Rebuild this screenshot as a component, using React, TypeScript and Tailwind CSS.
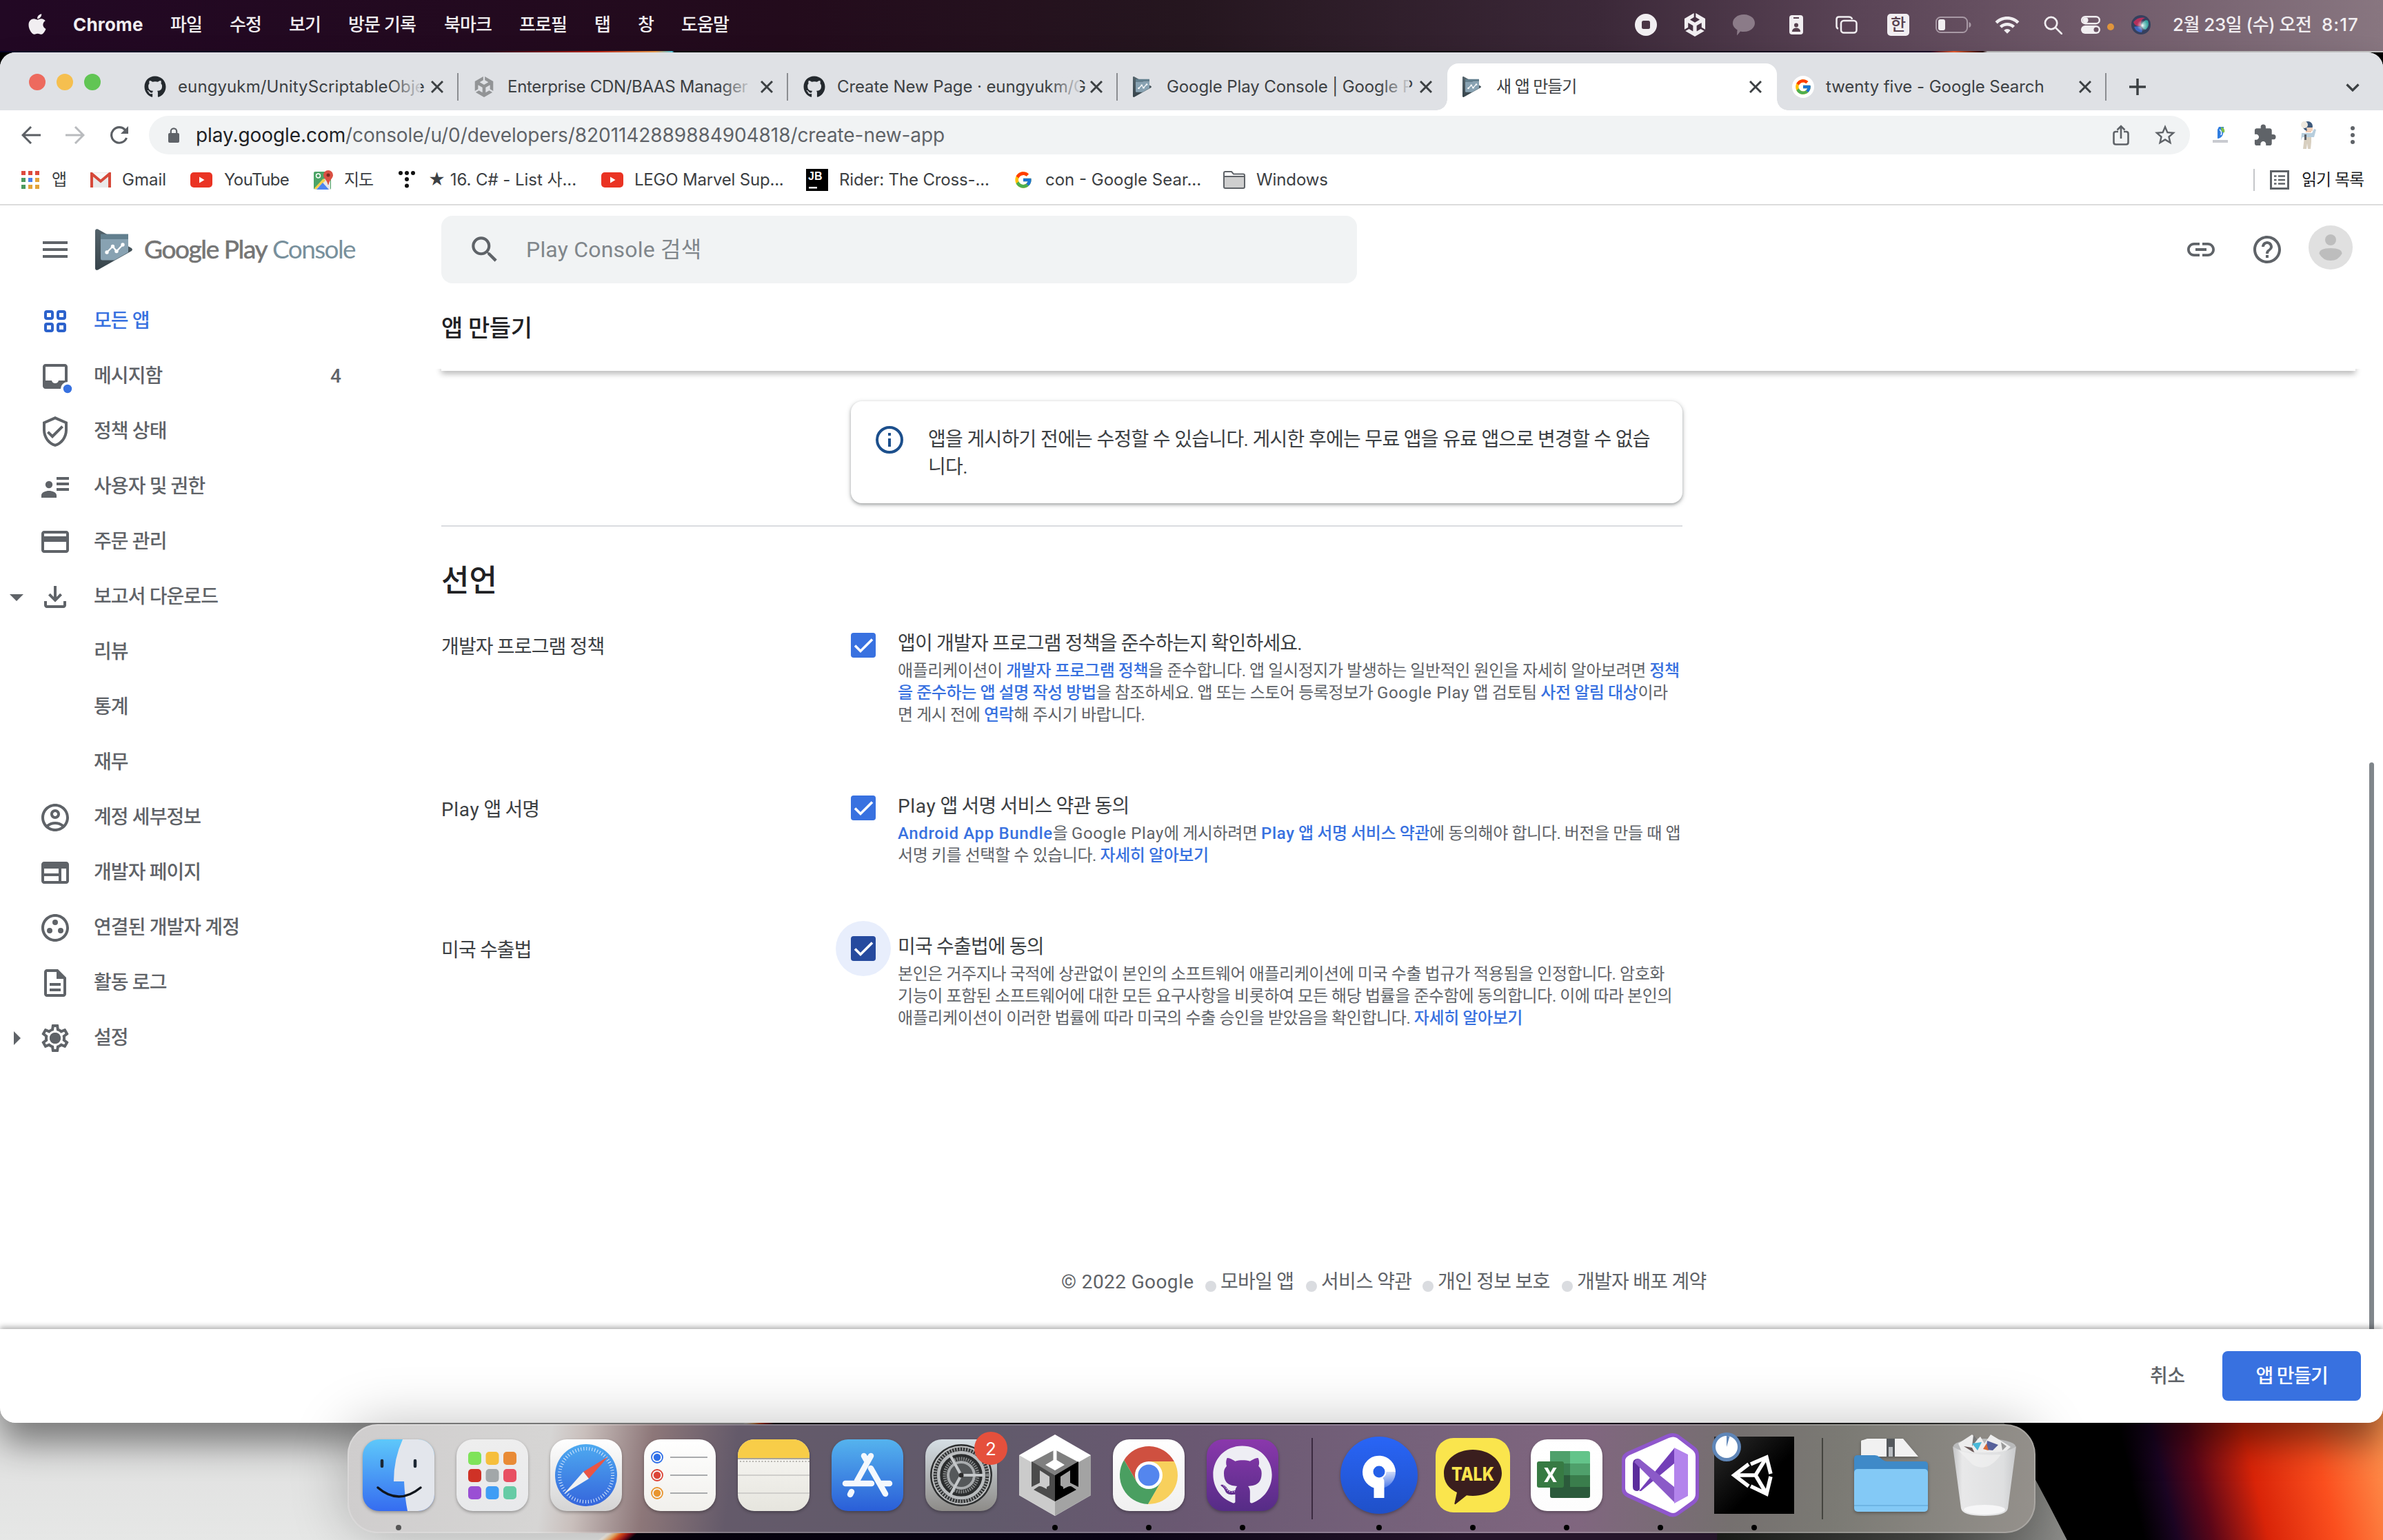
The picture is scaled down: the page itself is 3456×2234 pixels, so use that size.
import React from 'react';
import { FaApple, FaGithub } from 'react-icons/fa';
import { FcGoogle } from 'react-icons/fc';
import { SiUnity } from 'react-icons/si';
import { MdWifi, MdExtension, MdStarBorder, MdLink, MdHelpOutline, MdSearch, MdOutlineVerifiedUser, MdCreditCard, MdOutlineAccountCircle, MdOutlineGroupWork, MdOutlineSettings, MdArrowDropDown, MdArrowRight } from 'react-icons/md';

type TProps = { className?: string; children: React.ReactNode };
const T = ({ className = '', children }: TProps) => (
  <span className={`block whitespace-nowrap ${className}`}>{children}</span>
);

const Cross = ({ className = '' }: { className?: string }) => (
  <svg viewBox="0 0 18 18" className={`size-[18px] shrink-0 ${className}`} stroke="#3c4043" strokeWidth="3" fill="none"><path d="M1 1l16 16M17 1L1 17" /></svg>
);

const PlayLogo = ({ className = '' }: { className?: string }) => (
  <svg viewBox="0 0 54 60" className={className}>
    <defs>
      <linearGradient id="pl" x1="0" y1="0" x2="0" y2="1"><stop offset="0" stopColor="#54636b" /><stop offset="1" stopColor="#37444b" /></linearGradient>
    </defs>
    <path d="M0 3C0 .5 2 -.5 4 .6L52 27.500c2.500 1.400 2.500 3.600 0 5L4 59.400C2 60.500 0 59.500 0 57z" fill="url(#pl)" />
    <path d="M8 15H48V34L28 45.500H10.500Q8 45.500 8 43z" fill="#88a2b2" />
    <path d="M8 7.500H48V15H8z" fill="#627f8e" />
    <path d="M17 34l8.500-8.500L31 32.500 40 23" fill="none" stroke="#fff" strokeWidth="2.200" />
    <g fill="#fff"><circle cx="17" cy="34" r="2.700" /><circle cx="25.500" cy="25.500" r="2.700" /><circle cx="31" cy="32.500" r="2.700" /><circle cx="40" cy="23" r="2.700" /></g>
  </svg>
);

const menu: [string, string][] = [
  ['파일', 'w-[45px]'], ['수정', 'w-[45px]'], ['보기', 'w-[45px]'], ['방문 기록', 'w-[98px]'],
  ['북마크', 'w-[68px]'], ['프로필', 'w-[68px]'], ['탭', 'w-[22px]'], ['창', 'w-[22px]'], ['도움말', 'w-[68px]'],
];

const MenuBar = () => (
  <div className="relative flex h-[74px] items-center bg-[linear-gradient(90deg,#220824_0%,#230b1c_33%,#25161f_50%,#3b2838_67%,#5a4456_78%,#6e5868_87%,#887680_100%)] pb-[2px] text-[26px] leading-[32px] text-[#f1eef1]">
    <FaApple className="mb-[2px] ml-[37px] size-[34px] shrink-0" />
    <T className="ml-[35px] w-[103px] font-bold tracking-[0.2px]">Chrome</T>
    <div className="ml-[38px] flex gap-[41px] font-medium tracking-[-0.9px]">
      {menu.map(([t, c]) => <T key={t} className={c}>{t}</T>)}
    </div>
    <div className="ml-auto flex items-center">
      <svg viewBox="0 0 32 32" className="size-[32px]"><circle cx="16" cy="16" r="16" fill="#f1eef1" /><rect x="10" y="10" width="12" height="12" rx="2.500" fill="#4a3545" /></svg>
      <SiUnity className="ml-[38px] size-[34px]" />
      <svg viewBox="0 0 32 31" className="ml-[38px] h-[31px] w-[32px]" fill="#8b7b88"><path d="M16 0c9 0 16 5.500 16 12.500S25 25 16 25c-1.800 0-3.500-.2-5-.6L6 30.500l.5-8.200C2.500 20 0 16.500 0 12.500 0 5.500 7 0 16 0z" /></svg>
      <svg viewBox="0 0 20 28" className="ml-[50px] h-[28px] w-[20px]"><rect width="20" height="28" rx="4" fill="#f1eef1" /><g fill="#57414f"><rect x="6" y="3" width="8" height="2" /><circle cx="10" cy="14.500" r="3" /><path d="M4 24c0-4 3-5.500 6-5.500s6 1.500 6 5.500z" /></g></svg>
      <svg viewBox="0 0 32 26" className="ml-[47px] h-[26px] w-[32px]" fill="none" stroke="#f1eef1" strokeWidth="2.500"><rect x="8" y="7" width="22.500" height="17.500" rx="4" /><path d="M4 18.500Q1.500 18 1.500 15V5Q1.500 1.500 5 1.500H19Q23.500 1.500 24 5" /></svg>
      <div className="ml-[43px] flex size-[32px] items-center justify-center rounded-[5px] bg-[#f1eef1] text-[24px] leading-[30px] font-medium text-[#57414f]">한</div>
      <svg viewBox="0 0 52 24" className="ml-[38px] h-[24px] w-[52px]"><rect x="1" y="1" width="45" height="22" rx="6.500" fill="none" stroke="#a899a5" strokeWidth="2" /><rect x="4" y="4" width="10" height="16" rx="3" fill="#f1eef1" /><path d="M48.500 8q3 1 3 4t-3 4z" fill="#a899a5" /></svg>
      <MdWifi className="ml-[33px] size-[38px]" />
      <svg viewBox="0 0 28 28" className="ml-[34px] size-[27px]" fill="none" stroke="#f1eef1" strokeWidth="2.800"><circle cx="11" cy="11" r="9" /><path d="M18 18l9 9" strokeLinecap="round" /></svg>
      <svg viewBox="0 0 28 26" className="ml-[27px] h-[26px] w-[28px]"><rect x="1.200" y="1.200" width="25.600" height="10" rx="5" fill="none" stroke="#f1eef1" strokeWidth="2.400" /><circle cx="6.500" cy="6.200" r="4" fill="#f1eef1" /><rect y="14" width="28" height="12" rx="6" fill="#f1eef1" /><circle cx="22" cy="20" r="3.500" fill="#6b5565" /></svg>
      <div className="mt-[6px] ml-[10px] size-[10px] rounded-full bg-[#e0953c]" />
      <svg viewBox="0 0 28 28" className="ml-[25px] size-[28px]">
        <defs><radialGradient id="siri"><stop offset="0" stopColor="#fff" /><stop offset=".35" stopColor="#fff" stopOpacity=".5" /><stop offset="1" stopColor="#fff" stopOpacity="0" /></radialGradient></defs>
        <circle cx="14" cy="14" r="14" fill="#35405e" /><path d="M3 10Q10 2 20 4q-8 3-6 11Q6 18 3 10z" fill="#b4305a" /><path d="M15 13q5-8 9-5 3 8-3 13-6-1-6-8z" fill="#3aa6a0" /><path d="M4 17q6-2 10 1 3 4 1 7-8 0-11-8z" fill="#3f66c0" /><circle cx="16" cy="15" r="8" fill="url(#siri)" />
      </svg>
      <T className="ml-[32px] w-[203px] font-medium tracking-[-0.5px]">2월 23일 (수) 오전</T>
      <T className="mr-[34px] ml-[13px] w-[55px] font-medium tracking-[1px]">8:17</T>
    </div>
  </div>
);

const Fade = () => <div className="absolute inset-y-0 right-0 w-[44px] bg-linear-to-r from-[#dfe1e500] to-[#dfe1e5e0]" />;

const tabs = [
  { icon: <FaGithub className="size-[32px] text-[#24292e]" />, text: 'eungyukm/UnityScriptableObje', cls: 'tracking-[0.1px]', sep: true, fade: true },
  { icon: <SiUnity className="size-[30px] text-[#929496]" />, text: 'Enterprise CDN/BAAS Manager', cls: 'tracking-[-0.3px]', sep: true, fade: true },
  { icon: <FaGithub className="size-[32px] text-[#24292e]" />, text: 'Create New Page · eungyukm/G', cls: 'tracking-[-0.1px]', sep: true, fade: true },
  { icon: <PlayLogo className="h-[30px] w-[27px]" />, text: 'Google Play Console | Google P', cls: 'tracking-[-0.1px]', sep: false, fade: true },
  { icon: <PlayLogo className="h-[30px] w-[27px]" />, text: '새 앱 만들기', cls: 'tracking-[-1.1px]', sep: false, fade: false, active: true },
  { icon: <span className="flex size-[32px] items-center justify-center rounded-full bg-white"><FcGoogle className="size-[26px]" /></span>, text: 'twenty five - Google Search', cls: 'tracking-[-0.05px]', sep: true, fade: false },
];

const TabStrip = () => (
  <div className="flex h-[84px] items-end bg-[#dfe1e5] text-[24px] leading-[30px] text-[#3c4043]">
    <div className="mb-[29px] ml-[42px] flex w-[145px] gap-[16px]">
      <div className="size-[24px] rounded-full bg-[#ed6a5e]" />
      <div className="size-[24px] rounded-full bg-[#f5bf4f]" />
      <div className="size-[24px] rounded-full bg-[#61c554]" />
    </div>
    {tabs.map((t) => (
      <div key={t.text} className={`relative flex h-[68px] w-[478px] shrink-0 items-center pl-[22px] ${t.active ? 'rounded-t-[16px] bg-white' : ''}`}>
        {t.active && <div className="absolute bottom-0 -left-[16px] size-[16px] bg-[radial-gradient(circle_at_0_0,transparent_15.500px,white_16px)]" />}
        {t.active && <div className="absolute -right-[16px] bottom-0 size-[16px] bg-[radial-gradient(circle_at_100%_0,transparent_15.500px,white_16px)]" />}
        <div className="flex w-[49px] shrink-0 items-center">{t.icon}</div>
        <div className="relative w-[352px] shrink-0">
          <T className={t.cls}>{t.text}</T>
          {t.fade && <Fade />}
        </div>
        <Cross className="ml-[15px]" />
        {t.sep && <div className="ml-auto h-[40px] w-[2px] bg-[#8b8d91]" />}
      </div>
    ))}
    <svg viewBox="0 0 24 24" className="mb-[22px] ml-[33px] size-[24px]" stroke="#3c4043" strokeWidth="3.500"><path d="M12 0v24M0 12h24" /></svg>
    <svg viewBox="0 0 20 12" className="mr-[34px] mb-[27px] ml-auto h-[12px] w-[20px]" stroke="#3c4043" strokeWidth="3.200" fill="none"><path d="M1.500 1.500L10 10l8.500-8.500" /></svg>
  </div>
);

const Toolbar = () => (
  <div className="flex h-[72px] items-center bg-white text-[28px] leading-[36px]">
    <svg viewBox="0 0 28 26" className="ml-[31px] h-[26px] w-[28px]" stroke="#5b5f64" strokeWidth="3" fill="none"><path d="M28 13H3M14 1L2 13l12 12" /></svg>
    <svg viewBox="0 0 28 26" className="ml-[36px] h-[26px] w-[28px]" stroke="#b9bbbe" strokeWidth="3" fill="none"><path d="M0 13h25M14 1l12 12-12 12" /></svg>
    <svg viewBox="0 0 28 28" className="ml-[36px] size-[28px]" stroke="#5b5f64" strokeWidth="3.200" fill="none"><path d="M24.500 18A11.300 11.300 0 1 1 22.500 6.500" /><path d="M27 1v11H16z" fill="#5b5f64" stroke="none" /></svg>
    <div className="ml-[29px] flex h-[56px] w-[2960px] items-center rounded-full bg-[#f1f3f4]">
      <svg viewBox="0 0 16 22" className="ml-[28px] h-[22px] w-[16px]" fill="#5f6368"><rect y="8" width="16" height="14" rx="2" /><path d="M3.800 9V5.500a4.200 4.200 0 0 1 8.400 0V9" fill="none" stroke="#5f6368" strokeWidth="2.200" /></svg>
      <div className="ml-[24px] flex tracking-[-0.07px] text-[#5f6368]">
        <T className="w-[217px] text-[#202124]">play.google.com</T>
        <T>/console/u/0/developers/8201142889884904818/create-new-app</T>
      </div>
      <svg viewBox="0 0 24 30" className="ml-auto h-[30px] w-[24px]" fill="none" stroke="#5f6368" strokeWidth="2.600"><path d="M8 10H4.500Q1.500 10 1.500 13v12.500q0 3 3 3h15q3 0 3-3V13q0-3-3-3H16M12 20V3M6.500 7.500L12 2l5.500 5.500" /></svg>
      <MdStarBorder className="mr-[18px] ml-[34px] size-[36px] text-[#5f6368]" />
    </div>
    <svg viewBox="0 0 24 26" className="ml-[32px] h-[26px] w-[24px]"><path d="M10 1h7v7l-2 6q-3 4-7 4V5z" fill="#2f7de0" /><path d="M13 1c4 1 6 4 5 8-3 1-5-2-5-8z" fill="#7fc04a" /><path d="M11 5q4 3 2 8" stroke="#fff" strokeWidth="1.500" fill="none" /><path d="M1 20h22v4H1z" fill="#c9cbd0" /></svg>
    <MdExtension className="ml-[35px] size-[35px] text-[#5f6368]" />
    <svg viewBox="0 0 28 42" className="ml-[32px] h-[42px] w-[28px]"><path d="M8 24h10v7l-1 10h-4l-1-8-1 8H6z" fill="#d8cfc0" /><path d="M4 18h15l3-6 3 1-3 11H5l-2 5z" fill="#b7cddc" /><path d="M10 8h8v9h-8z" fill="#f0c8ae" /><circle cx="13" cy="8" r="7" fill="#3e5a7c" /><circle cx="8" cy="6" r="5" fill="#efe9df" /><path d="M11 10h9v5h-8z" fill="#f3d2bb" /><path d="M8 20h3v8H8z" fill="#5c5f66" /></svg>
    <svg viewBox="0 0 6 26" className="mr-[41px] ml-auto h-[26px] w-[6px]" fill="#5f6368"><circle cx="3" cy="3" r="3" /><circle cx="3" cy="13" r="3" /><circle cx="3" cy="23" r="3" /></svg>
  </div>
);

const YouTube = ({ className = '' }: { className?: string }) => (
  <svg viewBox="0 0 32 22" className={`h-[22px] w-[32px] shrink-0 ${className}`}><rect width="32" height="22" rx="5" fill="#ea3323" /><path d="M13 6.500v9l7.500-4.500z" fill="#fff" /></svg>
);

const Bookmarks = () => (
  <div className="flex h-[66px] items-center border-b-2 border-[#dcdcdc] bg-white pb-[7px] text-[24px] leading-[30px] text-[#3c4043]">
    <svg viewBox="0 0 26 26" className="ml-[31px] size-[26px]">
      <g fill="#dd4b3e"><path d="M0 0h6v6H0zM10 0h6v6h-6zM20 0h6v6h-6z" /></g><path d="M0 10h6v6H0zM0 20h6v6H0z" fill="#4c9a5f" /><path d="M10 10h6v6h-6z" fill="#4c82ee" /><path d="M20 10h6v6h-6zM10 20h6v6h-6zM20 20h6v6h-6z" fill="#e2a33a" />
    </svg>
    <T className="ml-[18px] w-[21px]">앱</T>
    <svg viewBox="0 0 30 22" className="ml-[35px] h-[22px] w-[30px]"><path d="M2 0h26v22H2z" fill="#e9e9e9" /><path d="M2 1l13 11L28 1z" fill="#f8f8f8" /><path d="M2 22V2l13 11L28 2v20" fill="none" stroke="#d6493a" strokeWidth="4" /></svg>
    <T className="ml-[16px] w-[64px]">Gmail</T>
    <YouTube className="ml-[35px]" />
    <T className="ml-[17px] w-[93px] tracking-[-0.6px]">YouTube</T>
    <svg viewBox="0 0 28 28" className="ml-[37px] size-[28px]"><rect y="2" width="25" height="26" rx="2" fill="#4ca466" /><path d="M0 28L24 4v24z" fill="#e6e6e6" /><path d="M1 26L14 12l3 3L3 28z" fill="#f7d04a" /><path d="M4 28l9-10 9 10z" fill="#4d84ef" /><path d="M21 0a7 7 0 0 1 7 7c0 5-5.500 7-6.500 14h-1C19.500 14 14 12 14 7a7 7 0 0 1 7-7z" fill="#da5043" /><circle cx="21" cy="7" r="2.500" fill="#7c2a22" /><circle cx="6.500" cy="8" r="3" fill="none" stroke="#fff" strokeWidth="1.500" /></svg>
    <T className="ml-[16px] w-[42px] tracking-[-1.1px]">지도</T>
    <svg viewBox="0 0 24 26" className="ml-[37px] h-[26px] w-[24px]"><g fill="#111"><circle cx="3" cy="3" r="3" /><circle cx="12" cy="3" r="3" /><circle cx="21" cy="3" r="3" /><circle cx="12" cy="12" r="3" /><circle cx="12" cy="21.500" r="3" /></g></svg>
    <T className="ml-[19px] w-[216px] tracking-[-0.05px]">★ 16. C# - List 사...</T>
    <YouTube className="ml-[35px]" />
    <T className="ml-[16px] w-[215px] tracking-[-0.2px]">LEGO Marvel Sup...</T>
    <svg viewBox="0 0 32 32" className="ml-[34px] size-[32px]"><path d="M0 0h32v32H0z" fill="#000" /><text x="3" y="16" fontSize="16" fontWeight="700" fill="#fff" fontFamily="Liberation Sans, sans-serif">JB</text><path d="M4 26h12v2.500H4z" fill="#fff" /></svg>
    <T className="ml-[16px] w-[218px] tracking-[-0.15px]">Rider: The Cross-...</T>
    <FcGoogle className="ml-[35px] size-[28px]" />
    <T className="ml-[18px] w-[224px]">con - Google Sear...</T>
    <svg viewBox="0 0 32 26" className="ml-[34px] h-[26px] w-[32px]" stroke="#5f6368" strokeWidth="2" fill="#cfcfcf"><path d="M1 8V3q0-2 2-2h9l3 3.500h14q2 0 2 2V8z" fill="#fff" /><path d="M1 8h30v15q0 2-2 2H3q-2 0-2-2z" /></svg>
    <T className="ml-[16px] w-[103px] tracking-[-0.1px]">Windows</T>
    <div className="ml-auto h-[32px] w-[2px] bg-[#c4c6c9]" />
    <svg viewBox="0 0 28 28" className="ml-[22px] size-[28px]" stroke="#5f6368" fill="none"><rect x="1.500" y="1.500" width="25" height="25" strokeWidth="3" /><path d="M6 8.500h3.500M6 14h3.500M6 19.500h3.500M12 8.500h10M12 14h10M12 19.500h10" strokeWidth="2.400" /></svg>
    <T className="mr-[28px] ml-[18px] w-[90px] tracking-[-1px] text-[#202124]">읽기 목록</T>
  </div>
);

const G = ({ children }: { children: React.ReactNode }) => <svg viewBox="0 0 24 24" className="size-[48px]" fill="#5f6368">{children}</svg>;

const nav: { icon?: React.ReactNode; text: string; arrow?: string; count?: string; active?: boolean }[] = [
  { text: '모든 앱', active: true, icon: <G><g fill="none" stroke="#2c62cc" strokeWidth="2"><rect x="5" y="5" width="5" height="5" rx="1" /><rect x="14" y="5" width="5" height="5" rx="1" /><rect x="5" y="14" width="5" height="5" rx="1" /><rect x="14" y="14" width="5" height="5" rx="1" /></g></G> },
  { text: '메시지함', count: '4', icon: <svg viewBox="0 0 24 24" className="size-[48px] overflow-visible" fill="#5f6368"><path fillRule="evenodd" d="M5 3h14c1.100 0 2 .9 2 2v14c0 1.100-.9 2-2 2H5c-1.100 0-2-.9-2-2V5c0-1.100.9-2 2-2zM5 5v10h4.500c.3 1.300 1.200 2 2.500 2s2.200-.7 2.500-2H19V5z" /><circle cx="21" cy="21" r="5" fill="#fff" /><circle cx="21" cy="21" r="3.100" fill="#3871e0" /></svg> },
  { text: '정책 상태', icon: <MdOutlineVerifiedUser className="size-[48px]" /> },
  { text: '사용자 및 권한', icon: <G><circle cx="7.500" cy="10.500" r="2.600" /><path d="M2 20v-1.800c0-2 3-3.200 5.500-3.200s5.500 1.200 5.500 3.200V20zM13 5h9v2h-9zM13 9h9v2h-9zM13 13h9v2h-9z" /></G> },
  { text: '주문 관리', icon: <MdCreditCard className="size-[48px]" /> },
  { text: '보고서 다운로드', arrow: 'down', icon: <G><path d="M11 4h2v8l2.600-2.600L17 10.800l-5 5-5-5 1.400-1.400L11 12zM4 15h2v3h12v-3h2v3c0 1.100-.9 2-2 2H6c-1.100 0-2-.9-2-2z" /></G> },
  { text: '리뷰' }, { text: '통계' }, { text: '재무' },
  { text: '계정 세부정보', icon: <MdOutlineAccountCircle className="size-[48px]" /> },
  { text: '개발자 페이지', icon: <G><path fillRule="evenodd" d="M4 4h16c1.100 0 2 .9 2 2v12c0 1.100-.9 2-2 2H4c-1.100 0-2-.9-2-2V6c0-1.100.9-2 2-2zM4 9v3.500h10.500V9zM4 14.500V18h10.500v-3.500zM16.500 9v9H20V9z" /></G> },
  { text: '연결된 개발자 계정', icon: <MdOutlineGroupWork className="size-[48px]" /> },
  { text: '활동 로그', icon: <G><path d="M8 16h8v2H8zm0-4h8v2H8zm6-10H6c-1.100 0-2 .9-2 2v16c0 1.100.89 2 1.990 2H18c1.100 0 2-.9 2-2V8l-6-6zm4 18H6V4h7v5h5v11z" /></G> },
  { text: '설정', arrow: 'right', icon: <span className="relative block size-[48px]"><MdOutlineSettings className="size-[48px]" /><span className="absolute top-[16px] left-[16px] size-[16px] rounded-full bg-[#5f6368]" /></span> },
];

const Sidebar = () => (
  <nav className="flex w-[640px] shrink-0 flex-col">
    <div className="flex h-[128px] items-center">
      <svg viewBox="0 0 36 24" className="ml-[62px] h-[24px] w-[36px]" fill="#5f6368"><path d="M0 0h36v4H0zM0 10h36v4H0zM0 20h36v4H0z" /></svg>
      <PlayLogo className="ml-[40px] h-[60px] w-[54px]" />
      <div className="mb-[3px] ml-[17px] flex font-[family-name:Lato,sans-serif] text-[37px] leading-[44px] text-[#757575]">
        <T className="w-[186px] tracking-[-1.4px] [-webkit-text-stroke:0.6px_#757575]">Google Play</T>
        <T className="tracking-[-1.600px] text-[#78909c]">Console</T>
      </div>
    </div>
    {nav.map((n) => (
      <div key={n.text} className={`flex h-[80px] items-center text-[28px] leading-[40px] font-medium ${n.active ? 'text-[#3871e0]' : 'text-[#5f6368]'}`}>
        <div className="flex w-[56px] items-center">
          {n.arrow === 'down' && <MdArrowDropDown className="size-[48px]" />}
          {n.arrow === 'right' && <MdArrowRight className="size-[48px]" />}
        </div>
        <div className="w-[80px]">{n.icon}</div>
        <T className="w-[343px] tracking-[-0.9px]">{n.text}</T>
        <div>{n.count}</div>
      </div>
    ))}
  </nav>
);

const A = ({ children }: { children: React.ReactNode }) => <span className="font-medium text-[#3871e0]">{children}</span>;
const En = ({ children }: { children: React.ReactNode }) => <span className="tracking-[0.650px]">{children}</span>;

type RowProps = { label: React.ReactNode; title: React.ReactNode; focus?: boolean; className: string; children: React.ReactNode };
const Declaration = ({ label, title, focus, className, children }: RowProps) => (
  <section className={`flex items-start ${className}`}>
    <div className="w-[594px] shrink-0 pt-[3px] text-[28px] leading-[36px] tracking-[-0.85px] text-[#3c4043]"><T>{label}</T></div>
    <div className="relative size-[36px] shrink-0">
      {focus && <div className="absolute -inset-[22px] rounded-full bg-[#e8eefc]" />}
      <div className={`relative size-[36px] rounded-[4px] ${focus ? 'bg-[#264a9e]' : 'bg-[#3871e0]'}`}>
        <svg viewBox="0 0 36 36" className="size-[36px]" fill="none" stroke="#fff" strokeWidth="3.600"><path d="M6 18.500l8 8L31 9.500" /></svg>
      </div>
    </div>
    <div className="ml-[32px]">
      <div className="mt-[-4px] h-[43px] text-[28px] leading-[40px] tracking-[-0.82px] text-[#3c4043]"><T>{title}</T></div>
      <div className="text-[24px] leading-[32px] tracking-[-0.42px] text-[#5f6368]">{children}</div>
    </div>
  </section>
);

const footer: [string, string][] = [['모바일 앱', 'w-[107px]'], ['서비스 약관', 'w-[130px]'], ['개인 정보 보호', 'w-[163px]'], ['개발자 배포 계약', 'w-[188px]']];

const Main = () => (
  <main className="flex flex-1 flex-col">
    <div className="flex h-[128px] items-center">
      <div className="flex h-[98px] w-[1328px] items-center rounded-[16px] bg-[#f1f3f4]">
        <MdSearch className="ml-[38px] size-[50px] text-[#5f6368]" />
        <T className="ml-[35px] text-[32px] leading-[40px] tracking-[0.2px] text-[#80868b]">Play Console 검색</T>
      </div>
      <MdLink className="ml-auto size-[48px] text-[#5f6368]" />
      <MdHelpOutline className="ml-[48px] size-[48px] text-[#5f6368]" />
      <svg viewBox="0 0 64 64" className="mt-[-7px] mr-[44px] ml-[36px] size-[64px]"><circle cx="32" cy="32" r="32" fill="#e0e0e0" /><g fill="#bdbdbd"><circle cx="32" cy="21" r="8" /><path d="M15.500 41q0-8 16.500-8t16.500 8Q43 51 32 51T15.500 41z" /></g></svg>
    </div>
    <div className="h-[102px] pt-[24px] text-[34px] leading-[52px] font-medium tracking-[-0.4px] text-[#202124]"><T>앱 만들기</T></div>
    <div className="mr-[40px] h-[10px] shrink-0 bg-white shadow-[0_4px_8px_rgba(0,0,0,0.3)] [clip-path:inset(7px_-12px_-20px_-12px)]" />
    <div className="mt-[44px] ml-[594px] flex h-[148px] w-[1206px] rounded-[16px] bg-white shadow-[0_2px_4px_rgba(60,64,67,0.4),0_2px_6px_2px_rgba(60,64,67,0.12)]">
      <svg viewBox="0 0 40 40" className="mt-[36px] ml-[36px] size-[40px] shrink-0"><circle cx="20" cy="20" r="18" fill="none" stroke="#1c4f8c" strokeWidth="4" /><path d="M18 10h4v4h-4zM18 18h4v12h-4z" fill="#1c4f8c" /></svg>
      <div className="mt-[36px] ml-[36px] text-[28px] leading-[40px] tracking-[-0.69px] text-[#3c4043]">
        <T>앱을 게시하기 전에는 수정할 수 있습니다. 게시한 후에는 무료 앱을 유료 앱으로 변경할 수 없습</T>
        <T>니다.</T>
      </div>
    </div>
    <div className="mt-[32px] h-[2px] w-[1800px] bg-[#dadce0]" />
    <h2 className="mt-[47px] text-[44px] leading-[64px] font-medium text-[#202124]"><T>선언</T></h2>
    <Declaration className="mt-[43px] h-[236px]" label="개발자 프로그램 정책" title="앱이 개발자 프로그램 정책을 준수하는지 확인하세요.">
      <T>애플리케이션이 <A>개발자 프로그램 정책</A>을 준수합니다. 앱 일시정지가 발생하는 일반적인 원인을 자세히 알아보려면 <A>정책</A></T>
      <T><A>을 준수하는 앱 설명 작성 방법</A>을 참조하세요. 앱 또는 스토어 등록정보가 <En>Google Play</En> 앱 검토팀 <A>사전 알림 대상</A>이라</T>
      <T>면 게시 전에 <A>연락</A>해 주시기 바랍니다.</T>
    </Declaration>
    <Declaration className="h-[204px]" label={<><En>Play</En> 앱 서명</>} title={<><En>Play</En> 앱 서명 서비스 약관 동의</>}>
      <T><A><En>Android App Bundle</En></A>을 <En>Google Play</En>에 게시하려면 <A><En>Play</En> 앱 서명 서비스 약관</A>에 동의해야 합니다. 버전을 만들 때 앱</T>
      <T>서명 키를 선택할 수 있습니다. <A>자세히 알아보기</A></T>
    </Declaration>
    <Declaration className="h-[200px]" focus label="미국 수출법" title="미국 수출법에 동의">
      <T>본인은 거주지나 국적에 상관없이 본인의 소프트웨어 애플리케이션에 미국 수출 법규가 적용됨을 인정합니다. 암호화</T>
      <T>기능이 포함된 소프트웨어에 대한 모든 요구사항을 비롯하여 모든 해당 법률을 준수함에 동의합니다. 이에 따라 본인의</T>
      <T>애플리케이션이 이러한 법률에 따라 미국의 수출 승인을 받았음을 확인합니다. <A>자세히 알아보기</A></T>
    </Declaration>
    <footer className="mt-[282px] ml-[899px] flex h-[40px] items-center text-[28px] leading-[40px] tracking-[-0.75px] text-[#5f6368]">
      <T className="w-[192px] tracking-[0.4px]">© 2022 Google</T>
      {footer.map(([t, c]) => (
        <div key={t} className="flex items-center">
          <div className="mt-[12px] mr-[6px] ml-[17px] size-[16px] rounded-full bg-[#dadce0]" />
          <T className={c}>{t}</T>
        </div>
      ))}
    </footer>
  </main>
);

const BrowserWindow = () => (
  <div className="relative flex h-[1988px] shrink-0 flex-col overflow-hidden rounded-[22px] bg-white shadow-[0_30px_50px_rgba(0,0,0,0.45)]">
    <TabStrip />
    <Toolbar />
    <Bookmarks />
    <div className="relative flex h-[1630px] shrink-0 overflow-hidden font-[family-name:Roboto,'Noto_Sans_CJK_KR',sans-serif]">
      <Sidebar />
      <Main />
      <div className="absolute right-[13px] bottom-0 h-[822px] w-[7px] rounded-t-full bg-[#80868b]" />
    </div>
    <div className="relative flex h-[136px] shrink-0 items-center justify-end bg-white font-[family-name:Roboto,'Noto_Sans_CJK_KR',sans-serif] text-[28px] leading-[40px] font-medium shadow-[0_-3px_8px_rgba(0,0,0,0.32)]">
      <T className="mt-[2px] w-[52px] tracking-[-0.5px] text-[#5f6368]">취소</T>
      <div className="mr-[32px] ml-[53px] flex h-[72px] w-[201px] items-center justify-center rounded-[8px] bg-[#3871e0] text-white"><T className="mt-[2px] tracking-[-1.200px]">앱 만들기</T></div>
    </div>
  </div>
);

const Sq = ({ id, a, b, children }: { id: string; a: string; b: string; children?: React.ReactNode }) => (
  <svg viewBox="0 0 104 104" className="size-[104px] overflow-visible drop-shadow-[0_2px_2px_rgba(0,0,0,0.3)]">
    <defs><linearGradient id={id} x1="0" y1="0" x2="0" y2="1"><stop offset="0" stopColor={a} /><stop offset="1" stopColor={b} /></linearGradient><clipPath id={`${id}c`}><rect width="104" height="104" rx="24" /></clipPath></defs>
    <rect width="104" height="104" rx="24" fill={`url(#${id})`} />
    <g clipPath={`url(#${id}c)`}>{children}</g>
  </svg>
);

const Finder = () => (
  <Sq id="fi" a="#5ec8fa" b="#356cf0">
    <path d="M58 0H104V104H65Q61 84 60 61H45Q45 28 58 0z" fill="#e3e6ec" />
    <path d="M28 31v8M76 31v8" stroke="#1c2733" strokeWidth="4.500" strokeLinecap="round" />
    <path d="M22 70q30 26 62 0" stroke="#10151c" strokeWidth="3.500" fill="none" strokeLinecap="round" />
  </Sq>
);
const pad = ['#7fe35a', '#f6bf3c', '#e98b36', '#cf3226', '#a2a7a9', '#e84f62', '#9a4fd4', '#3f9df5', '#66cba5'];
const Launchpad = () => (
  <Sq id="lp" a="#eeeeee" b="#e8e9eb">
    {pad.map((c, i) => <rect key={c} x={17 + (i % 3) * 25.500} y={18 + Math.floor(i / 3) * 25} width="19" height="19" rx="5" fill={c} />)}
  </Sq>
);
const Safari = () => (
  <Sq id="sa" a="#ffffff" b="#d4d4d4">
    <defs><linearGradient id="sb" x1="0" y1="0" x2="0" y2="1"><stop offset="0" stopColor="#4eaaf0" /><stop offset="1" stopColor="#3565dc" /></linearGradient></defs>
    <circle cx="52" cy="52" r="45" fill="url(#sb)" />
    <circle cx="52" cy="52" r="38.500" fill="none" stroke="#dceafc" strokeWidth="5" strokeDasharray="1 3.032" />
    <path d="M84 25L56 57 48 47z" fill="#ea5545" /><path d="M20 79L48 47 56 57z" fill="#f2f2f2" />
  </Sq>
);
const Reminders = () => (
  <Sq id="re" a="#ffffff" b="#f1f0ec">
    {['#2f6fe8', '#dc4437', '#e8952f'].map((c, i) => (
      <g key={c}><circle cx="19" cy={26 + i * 26} r="8" fill="none" stroke={c} strokeWidth="1.800" /><circle cx="19" cy={26 + i * 26} r="5.200" fill={c} /><path d={`M38 ${26 + i * 26}h54`} stroke="#a9abad" strokeWidth="2" /></g>
    ))}
  </Sq>
);
const Notes = () => (
  <Sq id="no" a="#f9f8f5" b="#e6e5de">
    <path d="M0 0h104v27H0z" fill="#f8cd48" /><path d="M0 27h104v2H0z" fill="#a8a49a" />
    <path d="M3 32h104" stroke="#b7b5b0" strokeWidth="2" strokeDasharray="2 2.500" />
    <path d="M0 52h104M0 78h104" stroke="#cfcecb" strokeWidth="2" />
  </Sq>
);
const AppStore = () => (
  <Sq id="as" a="#55b3ee" b="#2a5ed8">
    <g stroke="#f4f8fd" strokeWidth="8.500" strokeLinecap="round" fill="none"><path d="M57 24L37 60M47 24l4 7M57 42l21 37M20 64h38M73 64h11M29 76l-2 4" /></g>
  </Sq>
);
const Settings = () => (
  <Sq id="se" a="#d6dfe5" b="#8d8b88">
    <circle cx="52" cy="52" r="45" fill="#2d2f30" /><circle cx="52" cy="52" r="41.500" fill="none" stroke="#c2c4c5" strokeWidth="2" />
    <circle cx="52" cy="52" r="38" fill="none" stroke="#9a9d9e" strokeWidth="5" strokeDasharray="1.800 2.200" />
    <circle cx="52" cy="52" r="33" fill="#2b2d2e" stroke="#b9bcbe" strokeWidth="4.500" />
    <circle cx="52" cy="52" r="24" fill="none" stroke="#858889" strokeWidth="5" strokeDasharray="1.800 1.500" /><circle cx="52" cy="52" r="19" fill="#55585a" stroke="#a9acae" strokeWidth="4" />
    <path d="M52 52h33M52 52L36 23M52 52L36 81" stroke="#c5c8ca" strokeWidth="4" /><circle cx="52" cy="52" r="3.500" fill="#2b2b2b" />
  </Sq>
);
const UnityHub = () => (
  <svg viewBox="0 0 104 118" className="h-[118px] w-[104px]">
    <path d="M52 0L104 30V88L52 118 0 88V30z" fill="#fff" /><path d="M0 30L52 59.500V118L0 88z" fill="#cbcbcb" /><path d="M104 30L52 59.500V118l52-30z" fill="#a3a3a3" />
    <path d="M52 22L86 40 52 59 18 40z" fill="#7f7f7f" /><path d="M49.500 16h5v21L66 44 52 52 38 44l11.500-7z" fill="#fff" />
    <path d="M18 39L52 59V97L21 80l9-6 10 5v-8L30 65v9l-12 2z" fill="#4b4b4b" /><path d="M86 39L52 59V97l31-17-9-6-10 5v-8l10-6v9l12 2z" fill="#000" />
    <path d="M30 52l14 9v13l-4 2-10-1-12 1 12-6z" fill="#cbcbcb" /><path d="M74 52L60 61v13l4 2 10-1 12 1-12-6z" fill="#a3a3a3" />
  </svg>
);
const Chrome = () => (
  <Sq id="ch" a="#ffffff" b="#f0f0f0">
    <g transform="translate(52 52)">
      <path d="M-35.800 -22A42 42 0 0 1 36.900 -20L0 -20L-17.320 10z" fill="#cf5040" />
      <path d="M36.900 -20A42 42 0 0 1 -1.100 42L17.320 10L0 -20z" fill="#f8d05c" />
      <path d="M-1.100 42A42 42 0 0 1 -35.800 -22L-17.320 10L17.320 10z" fill="#4a9f61" />
      <circle r="20" fill="#fff" /><circle r="15.500" fill="#5486ee" />
    </g>
  </Sq>
);
const GitHubApp = () => (
  <Sq id="gh" a="#8a38ac" b="#552c86"><g transform="translate(8 8)"><FaGithub size={88} color="#eeeef4" /></g></Sq>
);
const Sourcetree = () => (
  <svg viewBox="0 0 112 112" className="size-[112px] drop-shadow-[0_2px_2px_rgba(0,0,0,0.3)]">
    <defs><linearGradient id="st" x1="0" y1="0" x2="0" y2="1"><stop offset="0" stopColor="#2965f6" /><stop offset="1" stopColor="#1f50c8" /></linearGradient><linearGradient id="su" gradientUnits="userSpaceOnUse" x1="66" y1="44" x2="70" y2="76"><stop offset="0" stopColor="#fff" /><stop offset="1" stopColor="#3f70e6" /></linearGradient></defs>
    <circle cx="56" cy="56" r="56" fill="url(#st)" /><path d="M56 51H80A24 24 0 0 1 60 75z" fill="url(#su)" /><path d="M80 51A24 24 0 1 0 48.500 74.500V89h15V66q0-4-2-6 5-3 5-9z" fill="#fff" /><circle cx="56" cy="51" r="8.500" fill="#2560e8" />
  </svg>
);
const Kakao = () => (
  <svg viewBox="0 0 108 108" className="size-[108px]">
    <rect width="108" height="108" rx="26" fill="#fae54d" /><path d="M54 17c24 0 42 15 42 34S78 84 54 84q-5 0-9-.8L29 96q-2 1-1.500-1.500L31 79Q12 70 12 51C12 32 30 17 54 17z" fill="#3a1e1e" />
    <text x="54" y="61.500" textAnchor="middle" fontSize="27" fontWeight="800" fill="#fae54d" fontFamily="Inter, sans-serif" textLength="62" lengthAdjust="spacingAndGlyphs">TALK</text>
  </svg>
);
const Excel = () => (
  <Sq id="ex" a="#ffffff" b="#fdfdfd">
    <path d="M28 17h29v18H28z" fill="#4fa06b" /><path d="M57 17h26q3 0 3 3v15H57z" fill="#63c48a" /><path d="M28 35h29v17H28z" fill="#3a7d50" /><path d="M57 35h29v17H57z" fill="#4fa06b" /><path d="M28 52h29v17H28z" fill="#2b5a3b" /><path d="M57 52h29v17H57z" fill="#3a7d4c" /><path d="M28 69h58v13q0 3-3 3H31q-3 0-3-3z" fill="#2b5a3b" />
    <rect x="9" y="32" width="39" height="38" rx="3" fill="#377a43" /><text x="28.500" y="62" textAnchor="middle" fontSize="30" fontWeight="700" fill="#fff" fontFamily="Roboto, sans-serif">X</text>
  </Sq>
);
const VisualStudio = () => (
  <svg viewBox="0 0 112 122" className="h-[122px] w-[112px]">
    <path d="M65 2q9-4 17 0l23 17q7 5 7 13v58q0 8-7 13L82 119q-8 5-17 0L8 93Q0 89 0 82V38q0-7 8-11z" fill="#8f57cc" />
    <path d="M68 7q7-3 12 0l22 17q5 4 5 10v54q0 6-5 10L80 114q-5 4-12 0L11 88q-6-3-6-8V40q0-5 6-8z" fill="#fff" />
    <path d="M16 44v34q0 6 7 6l3-2V38l-3-1q-7 1-7 7z" fill="#5b2d9c" /><path d="M25 84L76 22v22L28 84z" fill="#733fb8" /><path d="M20 39q5-4 9 1l47 38v22L18 42z" fill="#8b5ac8" /><path d="M76 21l20 10v60l-20 11z" fill="#b384ec" />
  </svg>
);
const UnityApp = () => (
  <div className="relative size-[116px]">
    <svg viewBox="0 0 116 112" className="mt-[2px] h-[112px] w-[116px]">
      <defs><linearGradient id="ua" x1="0" y1="0" x2="1" y2="1"><stop offset="0" stopColor="#2c2c2c" /><stop offset=".6" stopColor="#000" /></linearGradient></defs>
      <path d="M0 0h116v112H0z" fill="url(#ua)" />
      <g fill="none" stroke="#fff" strokeWidth="5.500"><path d="M50 40L29 56l21 16M53 40L76 30l6 24M53 72l23 11 6-25M34 56h26l16-26M60 56l16 27" /></g>
    </svg>
    <svg viewBox="0 0 42 42" className="absolute -top-[4px] -left-[3px] size-[42px]"><circle cx="21" cy="21" r="21" fill="#5f86b8" /><circle cx="21" cy="21" r="16" fill="#fff" /><path d="M21 21V5l4.500.6z" fill="#5f86b8" /></svg>
  </div>
);
const Folder = () => (
  <svg viewBox="0 0 108 106" className="h-[106px] w-[108px] drop-shadow-[0_2px_2px_rgba(0,0,0,0.3)]">
    <path d="M11 4q0-2 3-2l6-2h52l22 26H11z" fill="#f1f1f1" /><path d="M48 0h12v26H48z" fill="#54585c" /><path d="M51 12h6v14h-6z" fill="#b8bcc0" />
    <path d="M1 20q0-5 5-5h25q4 0 7 3l5 4q3 2 6 2h54q5 0 5 5v12H1z" transform="translate(0 9)" fill="#3f8ac8" /><rect x="1" y="44" width="107" height="62" rx="5" fill="#83c9f6" /><path d="M1 97h107" stroke="#6db4e4" strokeWidth="2" />
  </svg>
);
const Trash = () => (
  <svg viewBox="0 0 92 120" className="h-[120px] w-[92px]">
    <defs><linearGradient id="tr" x1="0" y1="0" x2="1" y2="0"><stop offset="0" stopColor="#c3c4c6" /><stop offset=".15" stopColor="#e8e8e9" /><stop offset=".8" stopColor="#dedfe0" /><stop offset="1" stopColor="#c8c9cb" /></linearGradient></defs>
    <ellipse cx="46" cy="18" rx="45" ry="11" fill="#b9babb" />
    <path d="M8 14l20-13 8 7 4-4 6 10L55 1l20 12 9 6-10 9H14z" fill="#ededed" /><path d="M30 2l6 6-8 10z" fill="#777" /><path d="M28 14l14-2-6 12z" fill="#49b8d8" /><path d="M50 10l16 6-8 8-10-1z" fill="#56609a" /><path d="M44 22l5-8 3 10z" fill="#d86a35" /><path d="M16 18l12 2 4 8z" fill="#6b5a5a" /><path d="M70 12l8 6-6 6z" fill="#999" />
    <path d="M0 18Q10 27 46 27T92 18L80 108q-2 11-34 11T12 108z" fill="url(#tr)" /><path d="M8 24q22 8 62 6-20 28-42 14z" fill="#f3f3f4" opacity=".6" />
    <ellipse cx="46" cy="110" rx="30" ry="7" fill="#f6f6f7" />
  </svg>
);

type Item = { el: React.ReactNode; dot?: string; badge?: string };
const dockA: Item[] = [{ el: <Finder />, dot: 'bg-[#555]' }, { el: <Launchpad /> }, { el: <Safari /> }, { el: <Reminders /> }, { el: <Notes /> }, { el: <AppStore /> }, { el: <Settings />, badge: '2' }, { el: <UnityHub />, dot: 'bg-black' }, { el: <Chrome />, dot: 'bg-black' }, { el: <GitHubApp />, dot: 'bg-black' }];
const dockB: Item[] = [{ el: <Sourcetree />, dot: 'bg-black' }, { el: <Kakao />, dot: 'bg-black' }, { el: <Excel />, dot: 'bg-black' }, { el: <VisualStudio />, dot: 'bg-black' }, { el: <UnityApp />, dot: 'bg-black' }];
const dockC: Item[] = [{ el: <Folder /> }, { el: <Trash /> }];

const DockGroup = ({ items }: { items: Item[] }) => (
  <>
    {items.map((it, i) => (
      <div key={i} className="relative flex w-[136px] flex-col items-center">
        <div className="mt-[12px] flex h-[124px] items-center">{it.el}</div>
        {it.badge && <div className="absolute top-[11px] right-[1px] flex size-[48px] items-center justify-center rounded-full bg-[#e5503c] text-[26px] text-white">{it.badge}</div>}
        {it.dot && <div className={`mt-[10px] size-[8px] rounded-full ${it.dot}`} />}
      </div>
    ))}
  </>
);

const Dock = () => (
  <div className="relative mt-[2px] ml-[504px] flex h-[158px] w-[2448px] rounded-[44px] bg-[linear-gradient(98deg,#cfcdcd_0%,#d6d5d4_12%,#c9bfbc_14%,#8d7779_18%,#645a6a_23%,#615a6b_38%,#6a5872_50%,#75617a_62%,#80667f_73%,#75706f_82%,#7b7a74_88%,#95918c_100%)] pl-[6px] shadow-[inset_0_0_0_2px_rgba(255,255,255,0.2),0_0_80px_rgba(0,0,0,0.25)]">
    <DockGroup items={dockA} />
    <div className="mt-[20px] flex h-[118px] w-[62px] justify-center pl-[3px]"><div className="w-[2px] bg-[#3b2a40]" /></div>
    <DockGroup items={dockB} />
    <div className="mt-[20px] flex h-[118px] w-[62px] justify-center"><div className="w-[2px] bg-[#44443f]" /></div>
    <DockGroup items={dockC} />
  </div>
);

const Wallpaper = () => (
  <svg viewBox="0 0 3456 234" preserveAspectRatio="none" className="absolute bottom-0 left-0 h-[234px] w-[3456px]">
    <defs>
      <linearGradient id="wg" x1="0" y1="0" x2="0" y2="1"><stop offset="0" stopColor="#dcdcdc" /><stop offset="1" stopColor="#e6e7e6" /></linearGradient>
      <linearGradient id="wr" gradientUnits="userSpaceOnUse" x1="3090" y1="150" x2="3470" y2="60"><stop offset="0" stopColor="#000" /><stop offset=".12" stopColor="#1a0422" /><stop offset=".25" stopColor="#5a0618" /><stop offset=".45" stopColor="#d92408" /><stop offset=".7" stopColor="#fb4f1e" /><stop offset="1" stopColor="#ff9d55" /></linearGradient>
      <linearGradient id="ws" gradientUnits="userSpaceOnUse" x1="872" y1="234" x2="888" y2="254"><stop offset="0" stopColor="#f4f0e8" /><stop offset=".25" stopColor="#f7b46a" /><stop offset=".45" stopColor="#f0501c" /><stop offset=".75" stopColor="#8a0c1c" /><stop offset="1" stopColor="#05020d" /></linearGradient>
      <linearGradient id="wd" x1="0" y1="0" x2="1" y2="0"><stop offset="0" stopColor="#05020d" /><stop offset=".45" stopColor="#0c0518" /><stop offset=".75" stopColor="#2a1830" /><stop offset="1" stopColor="#2a1830" /></linearGradient>
      <linearGradient id="we" x1="0" y1="0" x2="1" y2="0"><stop offset="0" stopColor="#1c1e1b" /><stop offset=".6" stopColor="#4a4b48" /><stop offset="1" stopColor="#8d8d8a" /></linearGradient>
    </defs>
    <path d="M0 0h1200v234H0z" fill="url(#wg)" />
    <path d="M1160 0L868 234H930L1222 0z" fill="url(#ws)" />
    <path d="M1205 0L912 234H2520V0z" fill="url(#wd)" />
    <path d="M2500 0h370Q2940 120 2998 234H2490z" fill="url(#we)" />
    <path d="M2870 0H3456V234H2998Q2940 120 2870 0z" fill="url(#wr)" />
  </svg>
);

export default function App() {
  return (
    <div className="relative flex h-[2234px] w-[3456px] flex-col overflow-hidden bg-black font-[family-name:Inter,'Noto_Sans_CJK_KR',sans-serif]">
      <Wallpaper />
      <MenuBar />
      <div className="h-[2px] bg-[linear-gradient(90deg,#0a0428_0%,#1a0520_20%,#c0281a_25%,#f0a050_27.500%,#5ad0e8_28.200%,#000_28.300%,#000_50%,#1c0428_81%,#f06030_82%,#200_83.200%,#b5b5b5_83.400%,#c9c9c9_100%)]" />
      <BrowserWindow />
      <Dock />
    </div>
  );
}
